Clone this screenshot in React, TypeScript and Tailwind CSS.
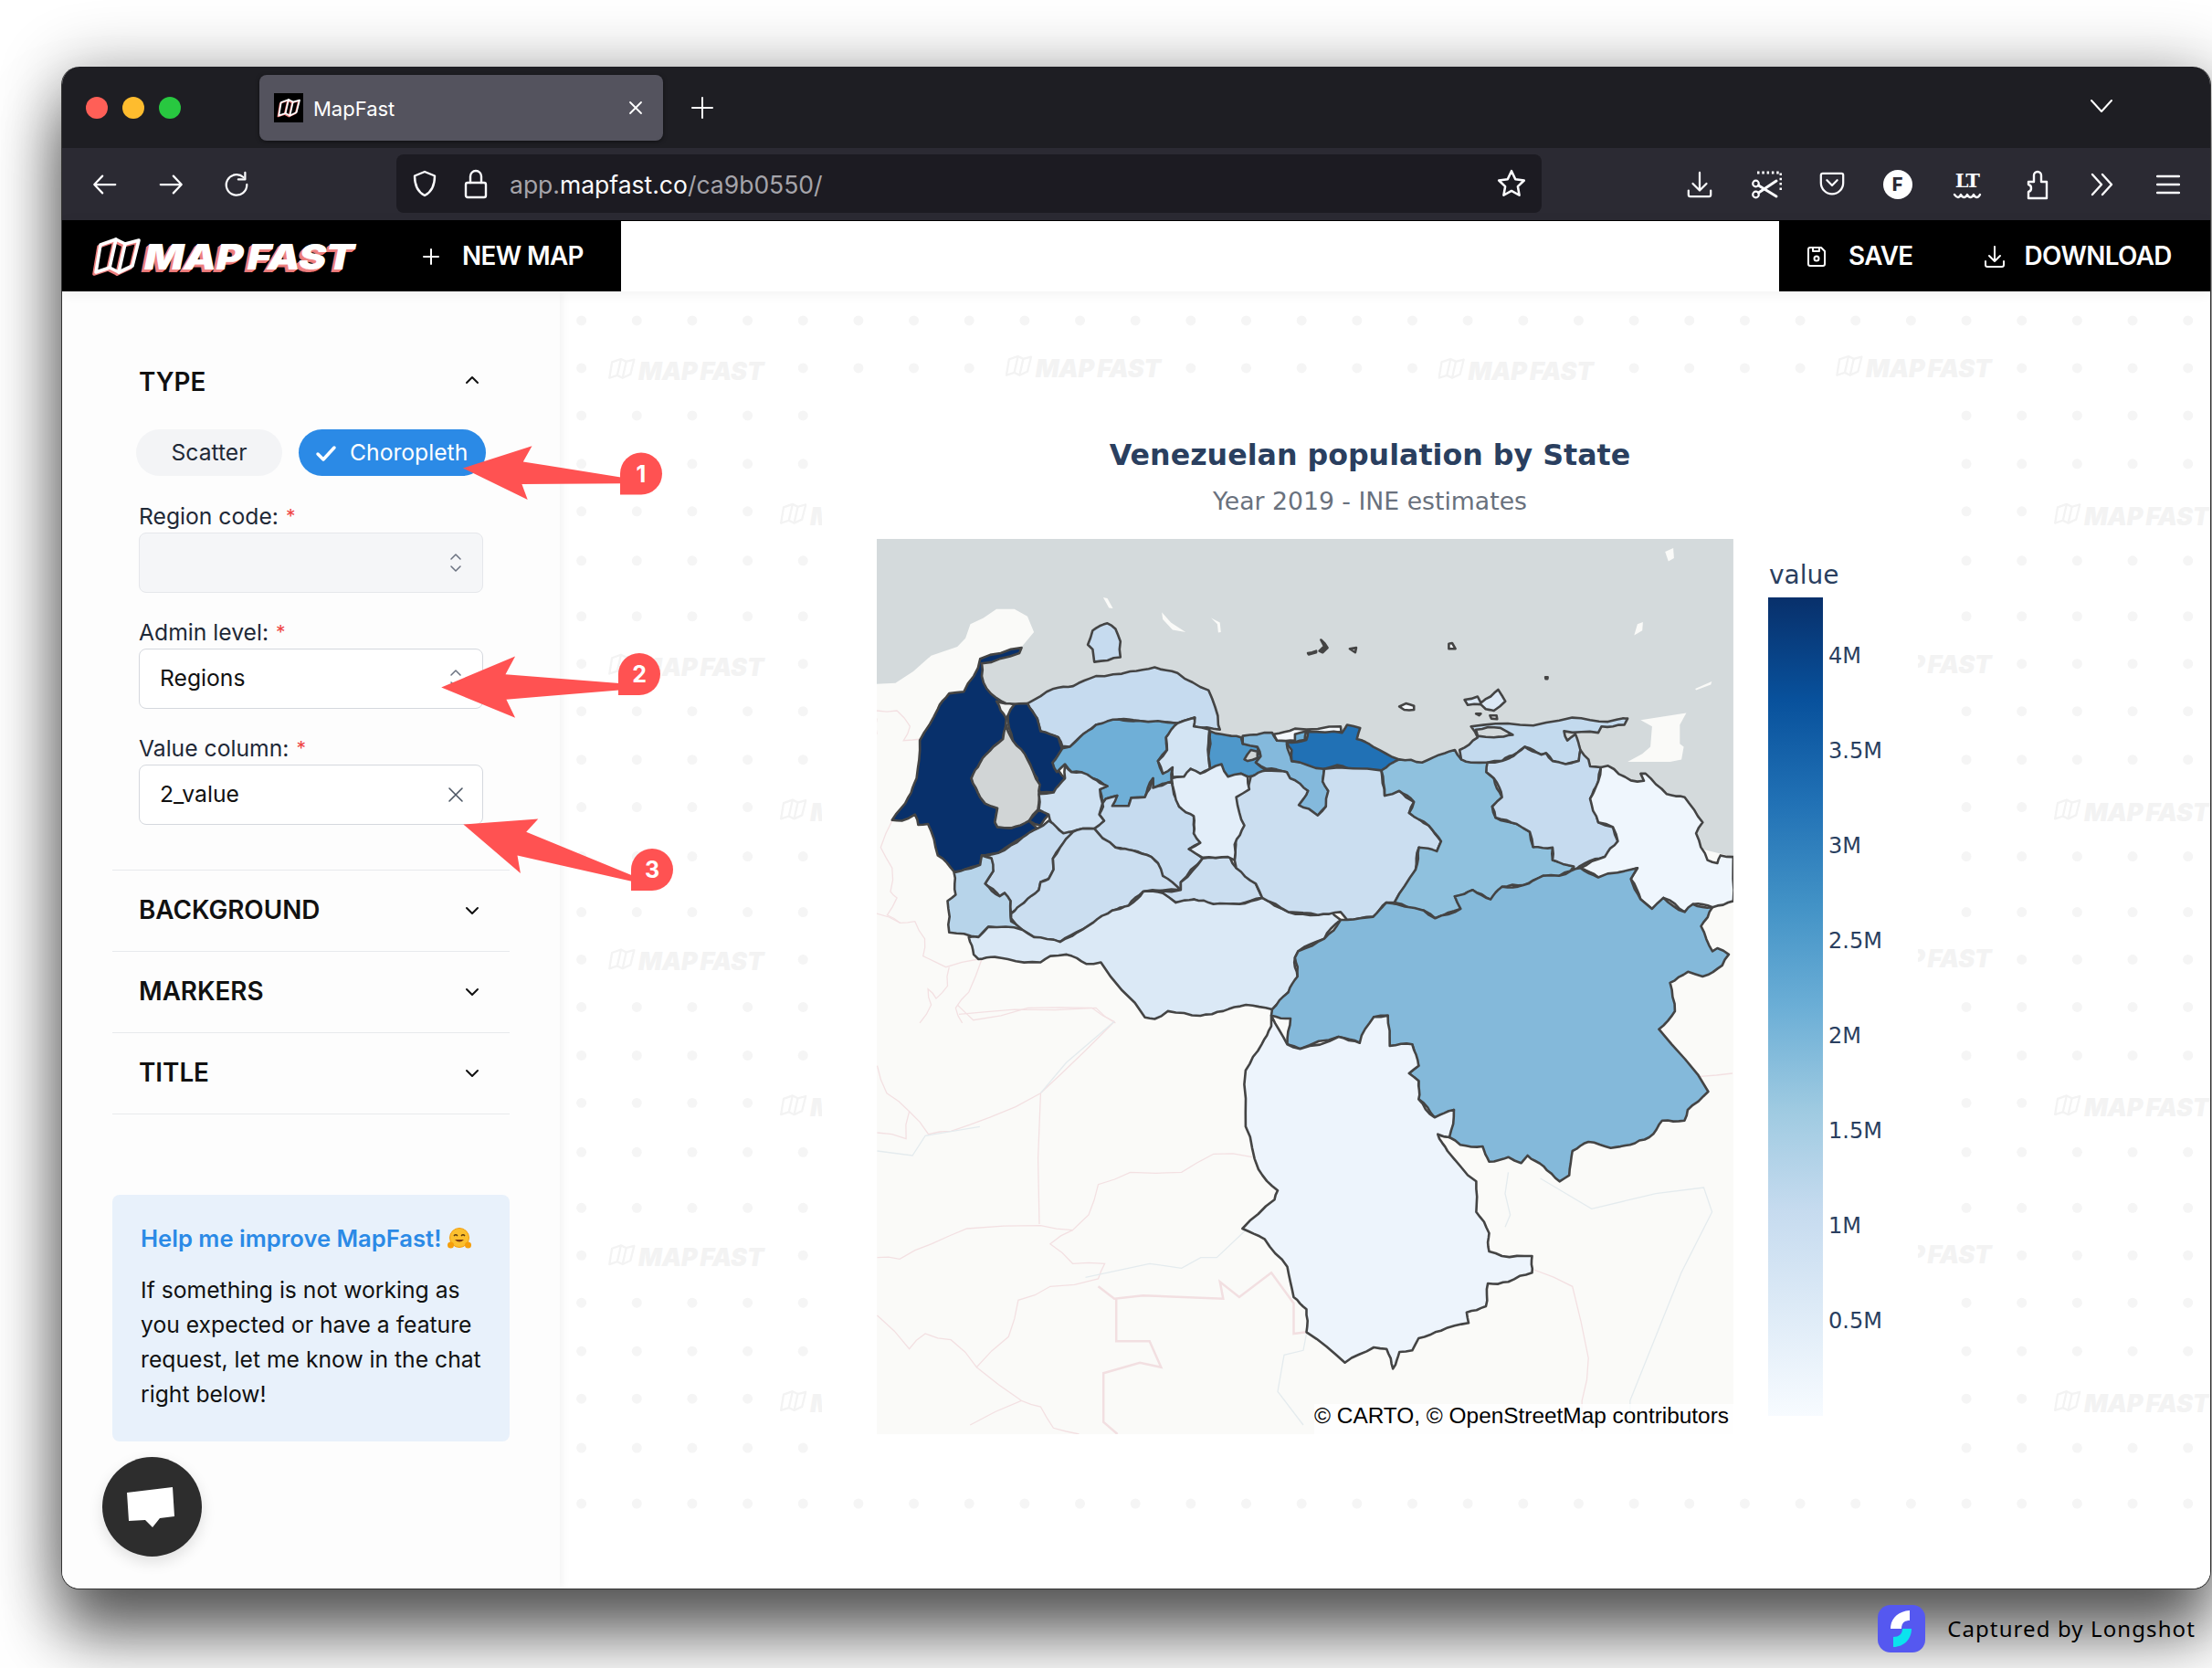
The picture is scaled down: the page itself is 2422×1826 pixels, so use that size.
import React from "react";

type P = number[];
const mk = (ox: number, oy: number, sx: number, sy: number) => (...n: number[]): P[] => {
  const out: P[] = [];
  for (let i = 0; i < n.length; i += 2) out.push([ox + n[i] / sx, oy + n[i + 1] / sy]);
  return out;
};
const A = mk(950, 580, 2.8, 2.904);
const B = mk(1450, 580, 2.8, 2.904);
const C = mk(950, 1100, 1.4255, 3);
const D = mk(60, 440, 2.063, 2.8);

const hash = (a: P, b: P) => {
  const s = a[0] + a[1] < b[0] + b[1] ? [a, b] : [b, a];
  const v = Math.sin(s[0][0] * 12.9898 + s[0][1] * 78.233 + s[1][0] * 37.719 + s[1][1] * 4.581) * 43758.5453;
  return v - Math.floor(v) - 0.5;
};
const rough = (p: P[], depth = 2): P[] => {
  if (depth === 0) return p;
  const out: P[] = [];
  for (let i = 0; i < p.length; i++) {
    const a = p[i];
    const b = p[(i + 1) % p.length];
    out.push(a);
    const dx = b[0] - a[0];
    const dy = b[1] - a[1];
    const len = Math.hypot(dx, dy);
    if (len > 9) {
      const h = hash(a, b) * Math.min(len * 0.14, 4.5);
      out.push([(a[0] + b[0]) / 2 - (dy / len) * h, (a[1] + b[1]) / 2 + (dx / len) * h]);
    }
  }
  return rough(out, depth - 1);
};
const d = (p: P[]) => "M" + p.map((q) => q[0].toFixed(1) + " " + q[1].toFixed(1)).join("L") + "Z";
const line = (p: P[]) => "M" + p.map((q) => q[0].toFixed(1) + " " + q[1].toFixed(1)).join("L");

const regions: [string, P[]][] = [
  ["#c6dbef", A(490,552,570,505,630,497,700,465,805,450,880,437,950,455,1045,510,1075,620,1080,635,1000,625,1003,597,970,607,950,615,830,607,770,603,700,620,650,660,620,690,597,688,585,660,530,640,520,600)],
  ["#c6dbef", A(690,320,735,297,760,315,775,355,775,405,695,420,690,380,675,365)],
  ["#08306b", A(472,375,465,392,350,425,350,465,365,505,395,535,430,555,400,548,425,600,415,665,385,690,345,740,318,790,345,850,360,870,398,885,390,930,398,945,440,948,495,925,520,950,475,978,400,1027,350,1035,345,1065,285,1085,265,1087,215,1035,185,935,155,938,145,905,105,925,75,923,125,850,150,790,160,670,215,570,250,520,295,515,345,410)],
  ["#08306b", A(440,555,490,552,520,600,530,640,585,660,597,700,567,740,605,790,570,835,528,835,520,790,490,730,445,670,430,590)],
  ["#08306b", A(495,925,525,890,555,905,530,940)],
  ["#d1d5d6", A(430,640,445,670,490,730,528,810,522,890,495,925,440,948,398,945,390,930,398,885,360,870,345,850,318,790,345,740,385,690,415,665,425,620)],
  ["#f0f2f2", A(395,545,450,555,430,590,425,600)],
  ["#6fafd7", A(597,695,620,690,650,660,700,620,770,603,830,607,950,615,915,660,918,700,890,735,905,775,935,755,932,800,875,820,875,790,850,850,808,852,800,878,750,878,765,845,730,855,720,870,712,825,735,815,690,790,655,770,625,770,605,745,580,770,567,740)],
  ["#d3e4f3", A(950,615,970,607,1003,597,1000,625,1048,635,1045,720,1050,760,1020,775,990,760,970,785,935,785,935,755,905,775,890,735,918,700,915,660)],
  ["#4e98cb", A(1050,640,1085,650,1145,660,1150,680,1195,690,1205,720,1190,740,1222,765,1165,785,1145,775,1105,785,1085,755,1050,760,1045,720)],
  ["#d1d5d6", A(1155,730,1175,700,1195,705,1195,725,1165,735)],
  ["#84b9dc", A(1150,655,1240,645,1255,670,1290,665,1285,680,1300,735,1400,760,1395,800,1412,830,1405,880,1380,908,1322,875,1350,830,1295,790,1285,770,1222,760,1190,740,1205,720,1195,690,1150,680)],
  ["#f4f8fc", A(1245,650,1310,632,1450,625,1452,642,1345,640,1310,670,1255,670)],
  ["#6fafd7", A(1310,650,1345,640,1340,668,1310,675)],
  ["#2171b5", [...A(1285,675,1345,668,1350,642,1455,645,1470,620,1510,630,1500,665), ...B(150,690,230,730,180,765,130,765,75,760,40,748,0,760), ...A(1300,735,1300,700)]],
  ["#c6dbef", A(720,870,730,855,765,845,750,878,800,878,808,852,850,850,875,790,875,820,932,800,955,880,1000,910,1000,965,1020,995,985,1015,1027,1045,960,1120,960,1145,905,1100,890,1060,870,1040,815,1020,760,1010,720,980,695,950,725,925,710,905,722,880)],
  ["#cfe1f2", A(525,840,570,835,605,790,605,750,625,770,655,770,690,790,735,815,712,825,720,870,710,905,725,925,695,950,660,950,625,960,600,965,565,935,555,905,525,890)],
  ["#c6dbef", A(365,1035,400,1027,475,978,520,950,555,925,600,965,630,960,590,1010,568,1045,570,1080,555,1110,530,1120,525,1145,480,1185,440,1220,438,1180,420,1155,405,1165,360,1125,385,1085,380,1045)],
  ["#b7d4ea", A(265,1090,285,1085,345,1065,350,1035,380,1045,385,1085,360,1125,405,1165,420,1155,438,1180,440,1245,475,1272,370,1262,340,1295,250,1280,245,1180,270,1160)],
  ["#cbdef0", A(440,1235,440,1220,480,1185,525,1145,530,1120,555,1110,570,1080,568,1045,590,1010,630,960,660,950,695,950,720,980,760,1010,815,1020,870,1040,890,1060,905,1100,960,1145,845,1150,800,1195,750,1210,690,1250,660,1270,590,1310,510,1295,475,1272)],
  ["#cbdef0", A(960,1145,960,1120,1027,1045,1110,1040,1130,1075,1190,1125,1210,1170,1140,1190,1060,1190,1000,1175,945,1185,905,1155,845,1150)],
  ["#dbe9f6", A(310,1295,340,1295,370,1262,475,1272,510,1295,590,1310,660,1270,690,1250,750,1210,800,1195,845,1150,905,1155,945,1185,1000,1175,1060,1190,1140,1190,1210,1170,1290,1215,1380,1225,1415,1205,1450,1240,1400,1300,1320,1340,1310,1360,1318,1420,1290,1470,1240,1525,1160,1510,1090,1530,1020,1545,920,1530,880,1555,850,1550,715,1375,670,1380,610,1350,560,1355,530,1375,430,1365,390,1358,340,1365,325,1350)],
  ["#cbdef0", [...A(1125,1050,1130,850,1165,825,1175,785,1222,765,1285,770,1295,790,1350,830,1322,875,1380,908,1405,880,1412,830,1395,800,1400,760), ...B(175,765,185,845,230,830,275,865,260,900,320,940,358,990,345,1022,290,1010,280,1080,215,1185,190,1185,150,1230,70,1240,50,1215), ...A(1380,1225,1290,1215,1210,1170,1190,1125,1130,1075)]],
  ["#e3eef9", A(932,790,970,785,990,760,1020,775,1050,760,1085,745,1105,785,1145,775,1165,785,1170,825,1130,850,1140,900,1155,940,1125,1000,1125,1050,1105,1040,1027,1042,985,1015,1020,995,1000,965,1000,910,955,880)],
  ["#8fc1de", B(175,765,230,730,300,740,370,710,400,700,420,730,500,740,497,770,520,790,545,850,515,880,525,915,590,935,630,960,640,1008,700,1010,700,1050,765,1070,755,1085,720,1100,670,1100,610,1130,545,1135,510,1175,455,1145,420,1165,400,1165,418,1205,340,1235,305,1210,215,1185,280,1080,290,1010,345,1022,358,990,320,940,260,900,275,865,230,830,185,845)],
  ["#c3daee", B(415,700,470,660,450,625,600,620,760,597,870,610,930,600,920,620,850,625,840,645,735,640,745,670,770,650,785,700,780,735,740,745,700,735,680,710,665,715,615,690,590,710,545,735,500,740,450,740,420,730)],
  ["#d4dadc", B(465,635,540,630,578,652,520,660,470,655)],
  ["#c6dbef", B(500,740,545,735,590,710,615,690,665,715,680,710,700,735,740,745,780,735,785,700,810,730,815,752,848,755,840,800,815,855,840,930,885,945,900,990,860,1040,800,1060,765,1085,765,1070,700,1050,700,1010,640,1008,630,960,590,935,525,915,515,880,545,850,520,790,497,770)],
  ["#eff6fd", B(848,755,870,750,940,797,980,798,970,775,985,775,1050,840,1105,850,1160,930,1140,965,1175,1050,1205,1060,1215,1035,1254,1040,1254,1180,1190,1200,1130,1190,1105,1215,1040,1170,1005,1205,970,1175,940,1110,960,1075,840,1105,785,1075,860,1040,900,990,885,945,840,930,815,855,840,800)],
  ["#84b9da", [...B(190,1185,305,1210,340,1235,418,1205,400,1165,455,1145,510,1175,545,1135,610,1130,670,1100,720,1100,755,1085,785,1075,840,1105,960,1075,940,1110,970,1175,1005,1205,1040,1170,1105,1215,1130,1190,1190,1200,1155,1260,1190,1340,1205,1330,1240,1350,1220,1385,1160,1420,1115,1405,1060,1440,1075,1530), ...C(1235,80,1312,285,1280,345,1275,380,1240,380,1220,435,1190,460,1160,470,1125,450,1100,480,1095,560,1080,580,1055,530,1030,495,1020,520,1000,500,970,515,960,465,925,460,908,435,890,425,915,345,885,370,860,310,860,250,845,225,860,200,850,130,815,135,812,35,790,40,768,125,735,105,675,145,655,130,660,45,630,35), ...A(1240,1525,1290,1470,1318,1420,1310,1360,1320,1340,1400,1300,1450,1240), ...B(70,1240,150,1230)]],
  ["#edf4fc", C(630,35,655,130,675,145,735,105,768,125,790,40,812,35,815,135,850,130,860,200,845,225,860,250,860,310,885,370,915,345,908,435,890,425,905,480,950,580,950,680,970,750,970,810,990,825,1037,825,1037,880,1000,910,968,915,965,990,935,1010,938,1045,895,1070,860,1095,850,1135,830,1140,820,1195,810,1130,790,1125,745,1175,685,1075,685,1000,665,960,655,860,620,770,585,735,635,640,640,610,610,540,590,400,590,215,615,130,630,70)],
  ["#dce9f6", B(430,540,470,530,480,550,510,530,533,508,555,545,520,575,495,570,480,555,440,557)],
  ["#f4f8fc", B(230,562,250,552,275,560,275,572,245,572)],
  ["#f4f8fc", B(508,590,528,590,530,602,512,600)],
  ["#f4f8fc", A(1478,378,1498,375,1495,390)],
  ["#f4f8fc", B(382,362,392,360,402,378,382,378)],
  ["#444444", A(1350,392,1375,385,1375,390,1352,396)],
  ["#444444", A(1390,350,1410,375,1395,390,1385,385,1400,370)],
  ["#444444", B(465,585,480,585,475,590)],
  ["#444444", B(678,468,685,468,684,474,679,474)],
];

const sea = [
  ...A(28,28), ...B(1254,28,1254,1040,1100,1000,600,900), ...A(1300,760,800,700,560,700,480,640,440,560,395,540,355,480,345,420,470,375,510,325,490,275,450,252,395,252,355,280,315,300,300,345,275,372,195,400,140,450,85,487,28,490),
];

const land: P[][] = [
  B(970,605,1110,582,1090,620,1090,680,1102,690,1095,730,1060,738,930,738,975,712,1000,690,1005,625),
  A(722,215,735,218,752,250,740,248),
  A(902,262,930,295,975,325,935,318,905,285),
  A(1053,280,1080,295,1083,325,1075,327,1072,300),
  B(1045,70,1070,58,1072,90,1055,100),
  B(950,335,960,300,977,293,975,320),
  B(1137,505,1188,482,1185,492,1140,510),
];

const pink: P[][] = [
  C(15,200,30,290,65,350,60,440,15,420),
  C(140,0,165,50,250,10,350,10,385,55,340,150,270,290,190,370,130,415,95,425,65,350),
  C(270,290,268,720),
  C(15,830,50,835,100,785,155,735,270,725,320,740,345,690,360,590,410,550,490,550,540,490,600,500),
  C(320,740,285,785,320,850,370,850,360,900,285,925,235,970,220,1090,170,1190,130,1100,90,1080,65,1130,15,1020),
  C(170,1190,240,1300,160,1380),
  C(240,1300,270,1320,290,1390,330,1410),
  C(1040,870,1100,925,1125,1160,1115,1300,1115,1400),
  C(1300,235,1350,225),
  A(28,575,90,575,130,625,110,670,165,665),
  A(28,600,28,650),
  A(75,925,40,1010,75,1075,70,1150,90,1170,60,1225,100,1250,145,1245,175,1300,170,1355,240,1390,340,1365),
  A(250,1390,245,1450,210,1490,185,1460,195,1510,160,1568),
  A(350,1365,310,1470,270,1520,290,1568),
  A(280,1540,450,1525,700,1520,760,1568),
  A(28,1220,100,1250),
];
const thickPink: P[][] = [
  C(360,925,385,965,430,955,555,965,550,910,580,960,630,880,665,980,665,1080,685,1075),
  C(388,965,388,1105,440,1105,458,1190,425,1175,368,1210,368,1370,390,1410),
];
const rivers: P[][] = [
  C(15,480,70,495,90,430,175,400),
  C(270,290,310,190,385,55),
  C(1000,550,995,620,1003,690,995,730),
  C(1050,570,1130,670,1230,620,1305,600,1318,680,1270,880,1190,1300,1190,1400),
  C(340,895,440,850,490,865,520,830,545,830,590,740),
  C(685,1080,680,1135,650,1150,640,1270,680,1380),
];

const LOGO_OUTLINE = "M5 6L22 0L32 5L47 1L40 29L25 36L15 31L0 36Z";
const LOGO_FOLDS = "M22 0L15 31M32 5L25 36";

function MapLogo({ className }: { className?: string }) {
  return (
    <svg viewBox="-5 -3 54 43" className={className}>
      <g fill="none" strokeLinejoin="round" strokeLinecap="round">
        <g stroke="#ee8080" strokeWidth="3.600" transform="translate(-2 2)">
          <path d={LOGO_OUTLINE} />
          <path d={LOGO_FOLDS} />
        </g>
        <g stroke="#ffffff" strokeWidth="3.600">
          <path d={LOGO_OUTLINE} />
          <path d={LOGO_FOLDS} />
        </g>
      </g>
    </svg>
  );
}

const Ico = ({ className, children, vb = "0 0 32 32", sw = 2.4 }: { className: string; children: React.ReactNode; vb?: string; sw?: number }) => (
  <svg viewBox={vb} className={className} fill="none" stroke="currentColor" strokeWidth={sw} strokeLinecap="round" strokeLinejoin="round">
    {children}
  </svg>
);

function Chevron({ up }: { up?: boolean }) {
  return (
    <Ico className="w-[20px] h-[20px] text-[#111]" vb="0 0 20 20" sw={2}>
      <path d={up ? "M4 13l6-6 6 6" : "M4 7l6 6 6-6"} />
    </Ico>
  );
}

function Section({ title }: { title: string }) {
  return (
    <div className="h-[89px] flex items-center justify-between pl-[29px] pr-[31px] border-b border-[#e8eaed]">
      <span className="text-[27.8px] font-semibold text-[#111]">{title}</span>
      <Chevron />
    </div>
  );
}

function Field({ label, children, disabled }: { label: string; children?: React.ReactNode; disabled?: boolean }) {
  return (
    <div className="flex flex-col">
      <div className="h-[36px] flex items-center text-[24.7px] text-[#1f2937] leading-none">
        {label}
        <span className="text-[#ef4444] ml-[8px] text-[21px]">*</span>
      </div>
      <div className={`h-[66px] rounded-[8px] border border-[#d5d8de] flex items-center justify-between pl-[22px] pr-[20px] text-[24.7px] text-[#111] ${disabled ? "bg-[#f5f6f8] border-[#e5e7eb]" : "bg-white"}`}>
        {children}
      </div>
    </div>
  );
}

const Updown = () => (
  <Ico className="w-[14px] h-[22px] text-[#6b7280] mr-[2px]" vb="0 0 14 22" sw={1.5}>
    <path d="M2 7l5-5 5 5M2 15l5 5 5-5" />
  </Ico>
);

const Slot = ({ ml, children }: { ml: string; children: React.ReactNode }) => (
  <div className={`w-[36px] h-[36px] shrink-0 flex items-center justify-center ${ml}`}>{children}</div>
);

const wm: [number, number][] = [
  [666, 405], [1101, 402], [1575, 405], [2011, 402],
  [666, 729], [666, 1052], [666, 1376],
  [854, 564], [854, 888], [854, 1212], [854, 1536],
  [2011, 726], [2011, 1049], [2011, 1373],
  [2250, 564], [2250, 888], [2250, 1212], [2250, 1536],
];
const rowYs: number[] = [];
for (let k = 0; k < 5; k++) for (const o of [0, 52, 104, 157, 209, 263]) if (351 + 324 * k + o < 1650) rowYs.push(351 + 324 * k + o);
const colXs: number[] = [];
for (let x = 636.5; x < 2422; x += 60.7) colXs.push(x);
const dots: [number, number][] = [];
for (const y of rowYs) for (const x of colXs) {
  if (wm.some(([wx, wy]) => x > wx - 12 && x < wx + 188 && Math.abs(y - wy) < 28)) continue;
  dots.push([x, y]);
}

const ticks = ["4M", "3.5M", "3M", "2.5M", "2M", "1.5M", "1M", "0.5M"];

function Arrow({ pts }: { pts: P[] }) {
  return <path d={d(pts)} fill="#ff5252" />;
}
function Badge({ x, y, n }: { x: number; y: number; n: string }) {
  const r = 23;
  return (
    <g>
      <path d={`M${x - r} ${y}L${x - r} ${y + r}L${x} ${y + r}A${r} ${r} 0 1 0 ${x - r} ${y}Z`} fill="#ff5252" />
      <text x={x} y={y + 9} textAnchor="middle" fontSize="25" fontWeight="700" fill="#fff" fontFamily="Inter, sans-serif">{n}</text>
    </g>
  );
}

export default function App() {
  return (
    <div className="relative w-[2422px] h-[1826px] overflow-hidden bg-white pt-[73px] pl-[67px] pr-px font-['Inter','Noto_Sans',sans-serif]">
      <div className="h-[1667px] rounded-[20px] overflow-hidden flex flex-col bg-white border-x border-b border-black/80 shadow-[0_50px_70px_rgba(0,0,0,0.6),0_0_70px_rgba(0,0,0,0.3)]">
        {/* tab strip */}
        <div className="h-[89px] shrink-0 bg-[#1e1e23] flex items-center text-white">
          <div className="flex items-center gap-[16px] pl-[26px] w-[216px]">
            <span className="w-[24px] h-[24px] rounded-full bg-[#ff5f57]" />
            <span className="w-[24px] h-[24px] rounded-full bg-[#febc2e]" />
            <span className="w-[24px] h-[24px] rounded-full bg-[#28c840]" />
          </div>
          <div className="w-[442px] h-[72px] rounded-[8px] bg-[#54535e] flex items-center pl-[16px] pr-[22px] shadow-[0_1px_4px_rgba(0,0,0,0.5)]">
            <span className="w-[32px] h-[32px] bg-black flex items-center justify-center">
              <MapLogo className="w-[26px] h-[22px]" />
            </span>
            <span className="ml-[11px] text-[22px] flex-1 mt-[4px]">MapFast</span>
            <Ico className="w-[16px] h-[16px]" vb="0 0 16 16" sw={1.8}><path d="M2 2l12 12M14 2L2 14" /></Ico>
          </div>
          <Ico className="w-[26px] h-[26px] ml-[30px]" vb="0 0 26 26" sw={2}><path d="M13 2v22M2 13h22" /></Ico>
          <div className="flex-1" />
          <Ico className="w-[26px] h-[16px] mr-[106px] -mt-[3px]" vb="0 0 26 16" sw={2}><path d="M2 2l11 12L24 2" /></Ico>
        </div>

        {/* toolbar */}
        <div className="h-[80px] shrink-0 bg-[#2b2a33] flex items-center text-[#fbfbfe] border-b border-black">
          <div className="flex items-center gap-[42px] pl-[32px] w-[366px]">
            <Ico className="w-[30px] h-[30px]"><path d="M28 16H4M13 6L3.5 16 13 26" /></Ico>
            <Ico className="w-[30px] h-[30px]"><path d="M4 16h24M19 6l9.5 10L19 26" /></Ico>
            <Ico className="w-[30px] h-[30px]"><path d="M24 7.5A12 12 0 1 0 28 16" /><path d="M26 2v8h-8" /></Ico>
          </div>
          <div className="w-[1254px] h-[64px] rounded-[8px] bg-[#1c1b22] flex items-center pl-[15px] pr-[16px] -mt-[1px]">
            <Ico className="w-[32px] h-[32px]"><path d="M16 3l11 4.5c0 10-3 17.5-11 21.5C8 25 5 17.500 5 7.500z" /></Ico>
            <Ico className="w-[32px] h-[34px] ml-[24px]" vb="0 0 32 34"><path d="M7 16h18a2 2 0 0 1 2 2v12a2 2 0 0 1-2 2H7a2 2 0 0 1-2-2V18a2 2 0 0 1 2-2z" /><path d="M10 16V9a6 6 0 0 1 12 0v7" /></Ico>
            <span className="ml-[21px] flex-1 text-[26.500px] leading-none text-[#a5a4aa] mt-[2px]">app.<span className="text-[#fbfbfe]">mapfast.co</span>/ca9b0550/</span>
            <Ico className="w-[34px] h-[34px]"><path d="M16 3l4 8.500 9 1.200-6.500 6.300 1.600 9L16 23.500 7.900 28l1.600-9L3 12.700l9-1.200z" /></Ico>
          </div>
          <div className="flex-1 flex items-center pl-[155px]">
            <Slot ml="">
              <Ico className="w-[30px] h-[32px]"><path d="M16 2v21M8 15l8 8 8-8M3 23v5a2 2 0 0 0 2 2h22a2 2 0 0 0 2-2v-5" /></Ico>
            </Slot>
            <Slot ml="ml-[37px]">
              <Ico className="w-[34px] h-[32px]" sw={2.2}>
                <path d="M6 3h26v20" strokeDasharray="2.500 2.800" strokeLinecap="butt" strokeWidth="3" />
                <circle cx="4.500" cy="15" r="3.300" /><circle cx="4.500" cy="27" r="3.300" />
                <path d="M7.500 17L27 29M7.500 25L27 12" strokeWidth="3" />
              </Ico>
            </Slot>
            <Slot ml="ml-[35.500px]">
              <Ico className="w-[30px] h-[30px]"><path d="M5 3h22a2 2 0 0 1 2 2v9a13 13 0 0 1-26 0V5a2 2 0 0 1 2-2z" /><path d="M10 11l6 6 6-6" /></Ico>
            </Slot>
            <Slot ml="ml-[36px]">
              <span className="w-[32px] h-[32px] rounded-full bg-white text-[#2b2a33] text-[20px] font-extrabold flex items-center justify-center">F</span>
            </Slot>
            <Slot ml="ml-[40px]">
              <div className="w-[32px] h-[34px] flex flex-col items-center leading-none">
                <span className="text-[21px] font-bold tracking-[-1.5px] leading-[25px] font-['DejaVu_Serif',serif]">LT</span>
                <Ico className="w-[32px] h-[8px]" vb="0 0 32 8" sw={2.4}><path d="M2 3c3 4 5 4 7 0 2 4 5 4 7 0 2 4 5 4 7 0 2 4 5 4 7 0" /></Ico>
              </div>
            </Slot>
            <Slot ml="ml-[41px]">
              <Ico className="w-[28px] h-[34px]" vb="0 0 28 34"><path d="M4 14h6V7a4 4 0 0 1 8 0v7h6v18H4v-7a4 4 0 0 0 3-4 4 4 0 0 0-3-4z" /></Ico>
            </Slot>
            <Slot ml="ml-[34px]">
              <Ico className="w-[28px] h-[28px]" vb="0 0 28 28"><path d="M4 3l10 11L4 25M15 3l10 11-10 11" /></Ico>
            </Slot>
            <Slot ml="ml-[37.500px]">
              <Ico className="w-[26px] h-[22px]" vb="0 0 26 22"><path d="M1 2h24M1 11h24M1 20h24" /></Ico>
            </Slot>
          </div>
        </div>

        {/* app header */}
        <div className="h-[77px] shrink-0 flex items-stretch z-10 bg-white shadow-[0_2px_14px_rgba(0,0,0,0.06)]">
          <div className="w-[612px] bg-black text-white flex items-center pl-[32px]">
            <MapLogo className="w-[54px] h-[43px]" />
            <span className="ml-[4px] w-[236px] whitespace-nowrap inline-block origin-left scale-x-[1.2] text-[38px] font-black italic leading-none tracking-[-0.5px] [word-spacing:-3px] [text-shadow:-1px_1px_0_#ee8080,-2px_2px_0_#ee8080,-3px_3px_0_#e57373]">MAP FAST</span>
            <Ico className="w-[20px] h-[20px] ml-[68px]" vb="0 0 20 20" sw={2}><path d="M10 2v16M2 10h16" /></Ico>
            <span className="ml-[24px] text-[27.800px] font-semibold tracking-[-0.6px] whitespace-nowrap">NEW MAP</span>
          </div>
          <div className="flex-1" />
          <div className="w-[472px] bg-black text-white flex items-center text-[27.800px] font-semibold tracking-[-0.6px]">
            <Ico className="w-[24px] h-[24px] ml-[29px]" vb="0 0 24 24" sw={2}><path d="M3 4a2 2 0 0 1 2-2h12l4 4v14a2 2 0 0 1-2 2H5a2 2 0 0 1-2-2z" /><circle cx="12" cy="14" r="2.500" /><path d="M8 2v4h7V2" /></Ico>
            <span className="ml-[23px]">SAVE</span>
            <Ico className="w-[26px] h-[26px] ml-[76px]" vb="0 0 26 26" sw={2}><path d="M13 2v16M7 12l6 6 6-6M3 18v4a2 2 0 0 0 2 2h16a2 2 0 0 0 2-2v-4" /></Ico>
            <span className="ml-[20px]">DOWNLOAD</span>
          </div>
        </div>

        {/* body */}
        <div className="flex-1 flex min-h-0">
          <aside className="relative w-[545px] shrink-0 bg-[#fdfdfd] px-[55px] pt-[54px] z-[5] shadow-[2px_0_10px_rgba(0,0,0,0.06)]">
            <div className="border-b border-[#e8eaed] pb-[49px]">
              <div className="h-[89px] flex items-center justify-between pl-[29px] pr-[31px]">
                <span className="text-[27.800px] font-semibold text-[#111] mt-[2px]">TYPE</span>
                <span className="-mt-[4px]"><Chevron up /></span>
              </div>
              <div className="flex gap-[18px] pl-[26px] mt-[8px]">
                <div className="w-[160px] h-[51px] rounded-full bg-[#f3f4f6] flex items-center justify-center text-[24.700px] text-[#1f2937]">Scatter</div>
                <div className="w-[205px] h-[51px] rounded-full bg-[#2b8ae6] flex items-center pl-[18px] text-[24.700px] text-white">
                  <Ico className="w-[24px] h-[24px]" vb="0 0 24 24" sw={3.5}><path d="M3 13l6 6L21 6" /></Ico>
                  <span className="ml-[14px]">Choropleth</span>
                </div>
              </div>
              <div className="pl-[29px] pr-[29px] mt-[26px] flex flex-col gap-[25px]">
                <Field label="Region code:" disabled><span /><Updown /></Field>
                <Field label="Admin level:"><span>Regions</span><Updown /></Field>
                <Field label="Value column:"><span>2_value</span><Ico className="w-[18px] h-[18px] text-[#4b5563]" vb="0 0 18 18" sw={1.6}><path d="M2 2l14 14M16 2L2 16" /></Ico></Field>
              </div>
            </div>
            <Section title="BACKGROUND" />
            <Section title="MARKERS" />
            <Section title="TITLE" />
            <div className="mt-[88px] h-[270px] rounded-[8px] bg-[#e8f1fb] pl-[31px] pr-[26px] pt-[29px] text-[24.700px] leading-[38px] text-[#111]">
              <div className="flex items-center text-[#2b8ae6] text-[25.600px] font-semibold">
                Help me improve MapFast!
                <svg viewBox="0 0 26 26" className="w-[26px] h-[26px] ml-[7px]">
                  <circle cx="13" cy="12" r="10.500" fill="#fbbf2e" stroke="#f59e0b" strokeWidth="1" />
                  <path d="M7 10q2-2.500 4 0M15 10q2-2.500 4 0" stroke="#5b3a10" strokeWidth="1.300" fill="none" />
                  <path d="M8 14q5 5 10 0z" fill="#7c3a10" />
                  <circle cx="3.500" cy="20" r="3.500" fill="#f59e0b" /><circle cx="22.500" cy="20" r="3.500" fill="#f59e0b" />
                </svg>
              </div>
              <p className="mt-[18px]">If something is not working as you expected or have a feature request, let me know in the chat right below!</p>
            </div>
            <div className="absolute left-[44px] top-[1276px] w-[109px] h-[109px] rounded-full bg-[#2d2d2d] shadow-[0_6px_16px_rgba(0,0,0,0.12)] flex items-center justify-center">
              <svg viewBox="0 0 109 109" className="w-[109px] h-[109px]"><path d="M27 39L77 33L79 65L63 67L55 77L47 69L29 70Z" fill="#fff" /></svg>
            </div>
          </aside>

          <main className="relative flex-1 bg-white min-w-0">
            <svg viewBox="613 319 1808 1421" className="absolute inset-0 w-full h-full">
              {dots.map(([x, y]) => <circle key={x + "-" + y} cx={x} cy={y} r="5.500" fill="#f5f5f5" />)}
              {wm.map(([x, y]) => (
                <g key={x + "_" + y}>
                  <svg x={x} y={y - 16} width="30" height="30" viewBox="-2 -2 52 42">
                    <path d={LOGO_OUTLINE} fill="none" stroke="#f3f3f3" strokeWidth="4" strokeLinejoin="round" />
                    <path d={LOGO_FOLDS} fill="none" stroke="#f3f3f3" strokeWidth="4" />
                  </svg>
                  <text x={x + 33} y={y + 11} fontFamily="Inter, sans-serif" fontWeight="900" fontStyle="italic" fontSize="27" letterSpacing="-0.200" wordSpacing="-2" fill="#f3f3f3">MAP FAST</text>
                </g>
              ))}
            </svg>
            <div className="relative ml-[287px] mt-[121px] w-[1200px] h-[1175px] bg-white flex flex-col">
              <div className="h-[150px] flex flex-col items-center font-['DejaVu_Sans',sans-serif]">
                <div className="mt-[39px] text-[31.700px] font-bold leading-[38px] text-[#2a3f5f]">Venezuelan population by State</div>
                <div className="mt-[17px] text-[26.700px] leading-[30px] text-[#69717d]">Year 2019 - INE estimates</div>
              </div>
              <div className="flex pl-[60px]">
                <div className="relative w-[938px] h-[980px] shrink-0 bg-[#fafaf8] overflow-hidden">
                  <svg viewBox="960 590 938 980" className="w-full h-full block">
                    <path d={d(sea)} fill="#d4dadc" />
                    {land.map((p, i) => <path key={i} d={d(p)} fill="#fafaf8" />)}
                    {pink.map((p, i) => <path key={i} d={line(rough(p, 1).slice(0, -1))} fill="none" stroke="#f3e0e2" strokeWidth="1.300" />)}
                    {thickPink.map((p, i) => <path key={i} d={line(p)} fill="none" stroke="#f2dfe1" strokeWidth="2.500" />)}
                    {rivers.map((p, i) => <path key={i} d={line(p)} fill="none" stroke="#e4ebee" strokeWidth="1.300" />)}
                    {regions.map(([c, p], i) => <path key={i} d={d(rough(p))} fill={c} stroke="#444444" strokeWidth="2.600" strokeLinejoin="round" />)}
                  </svg>
                  <div className="absolute right-0 bottom-0 h-[33px] w-[459px] bg-white/80 flex items-center justify-end pr-[5px] pb-[6px] text-[24.400px] text-black font-['Liberation_Sans',sans-serif] whitespace-nowrap">© CARTO, © OpenStreetMap contributors</div>
                </div>
                <div className="ml-[38px] w-[160px] shrink-0 font-['DejaVu_Sans',sans-serif] text-[#2a3f5f]">
                  <div className="h-[64px] text-[28px] leading-[80px] pl-px -mt-[0px]">value</div>
                  <div className="flex">
                    <div className="w-[60px] h-[896px] shrink-0 bg-[linear-gradient(to_top,#f7fbff,#deebf7_12.5%,#c6dbef_25%,#9ecae1_37.5%,#6baed6_50%,#4292c6_62.5%,#2171b5_75%,#08519c_87.5%,#08306b)]" />
                    <div className="pl-[6px] pt-[12px] text-[24px]">
                      {ticks.map((t) => <div key={t} className="h-[104px] flex items-center whitespace-nowrap">{t}</div>)}
                    </div>
                  </div>
                </div>
              </div>
            </div>
          </main>
        </div>
      </div>

      {/* capture credit */}
      <div className="flex items-center justify-end h-[85px] pr-[17px] text-black">
        <svg viewBox="0 0 52 52" className="w-[52px] h-[52px]">
          <rect width="52" height="52" rx="14" fill="#5558f0" />
          <path d="M35 6C22 7 14 15 14 26H26C26 20 29 17 35 17Z" fill="#fff" />
          <path d="M27 26H37C37 37 29 46 17 46V35C23 35 27 32 27 26Z" fill="#0be3ee" />
        </svg>
        <span className="ml-[24px] text-[24px] tracking-[1.100px] font-['Noto_Sans',sans-serif]">Captured by Longshot</span>
      </div>

      {/* annotation arrows */}
      <svg viewBox="0 0 2422 1826" className="absolute inset-0 z-20 w-full h-full pointer-events-none">
        <Arrow pts={D(922,203,1078,135,1058,183,1285,232,1285,250,1055,252,1068,300)} />
        <Badge x={702} y={518.600} n="1" />
        <Arrow pts={D(873,875,1040,780,1018,835,1275,862,1275,883,1020,912,1040,968)} />
        <Badge x={700} y={738} n="2" />
        <Arrow pts={D(923,1295,1092,1278,1065,1318,1310,1455,1305,1470,1045,1390,1052,1445)} />
        <Badge x={714} y={952} n="3" />
      </svg>
    </div>
  );
}
